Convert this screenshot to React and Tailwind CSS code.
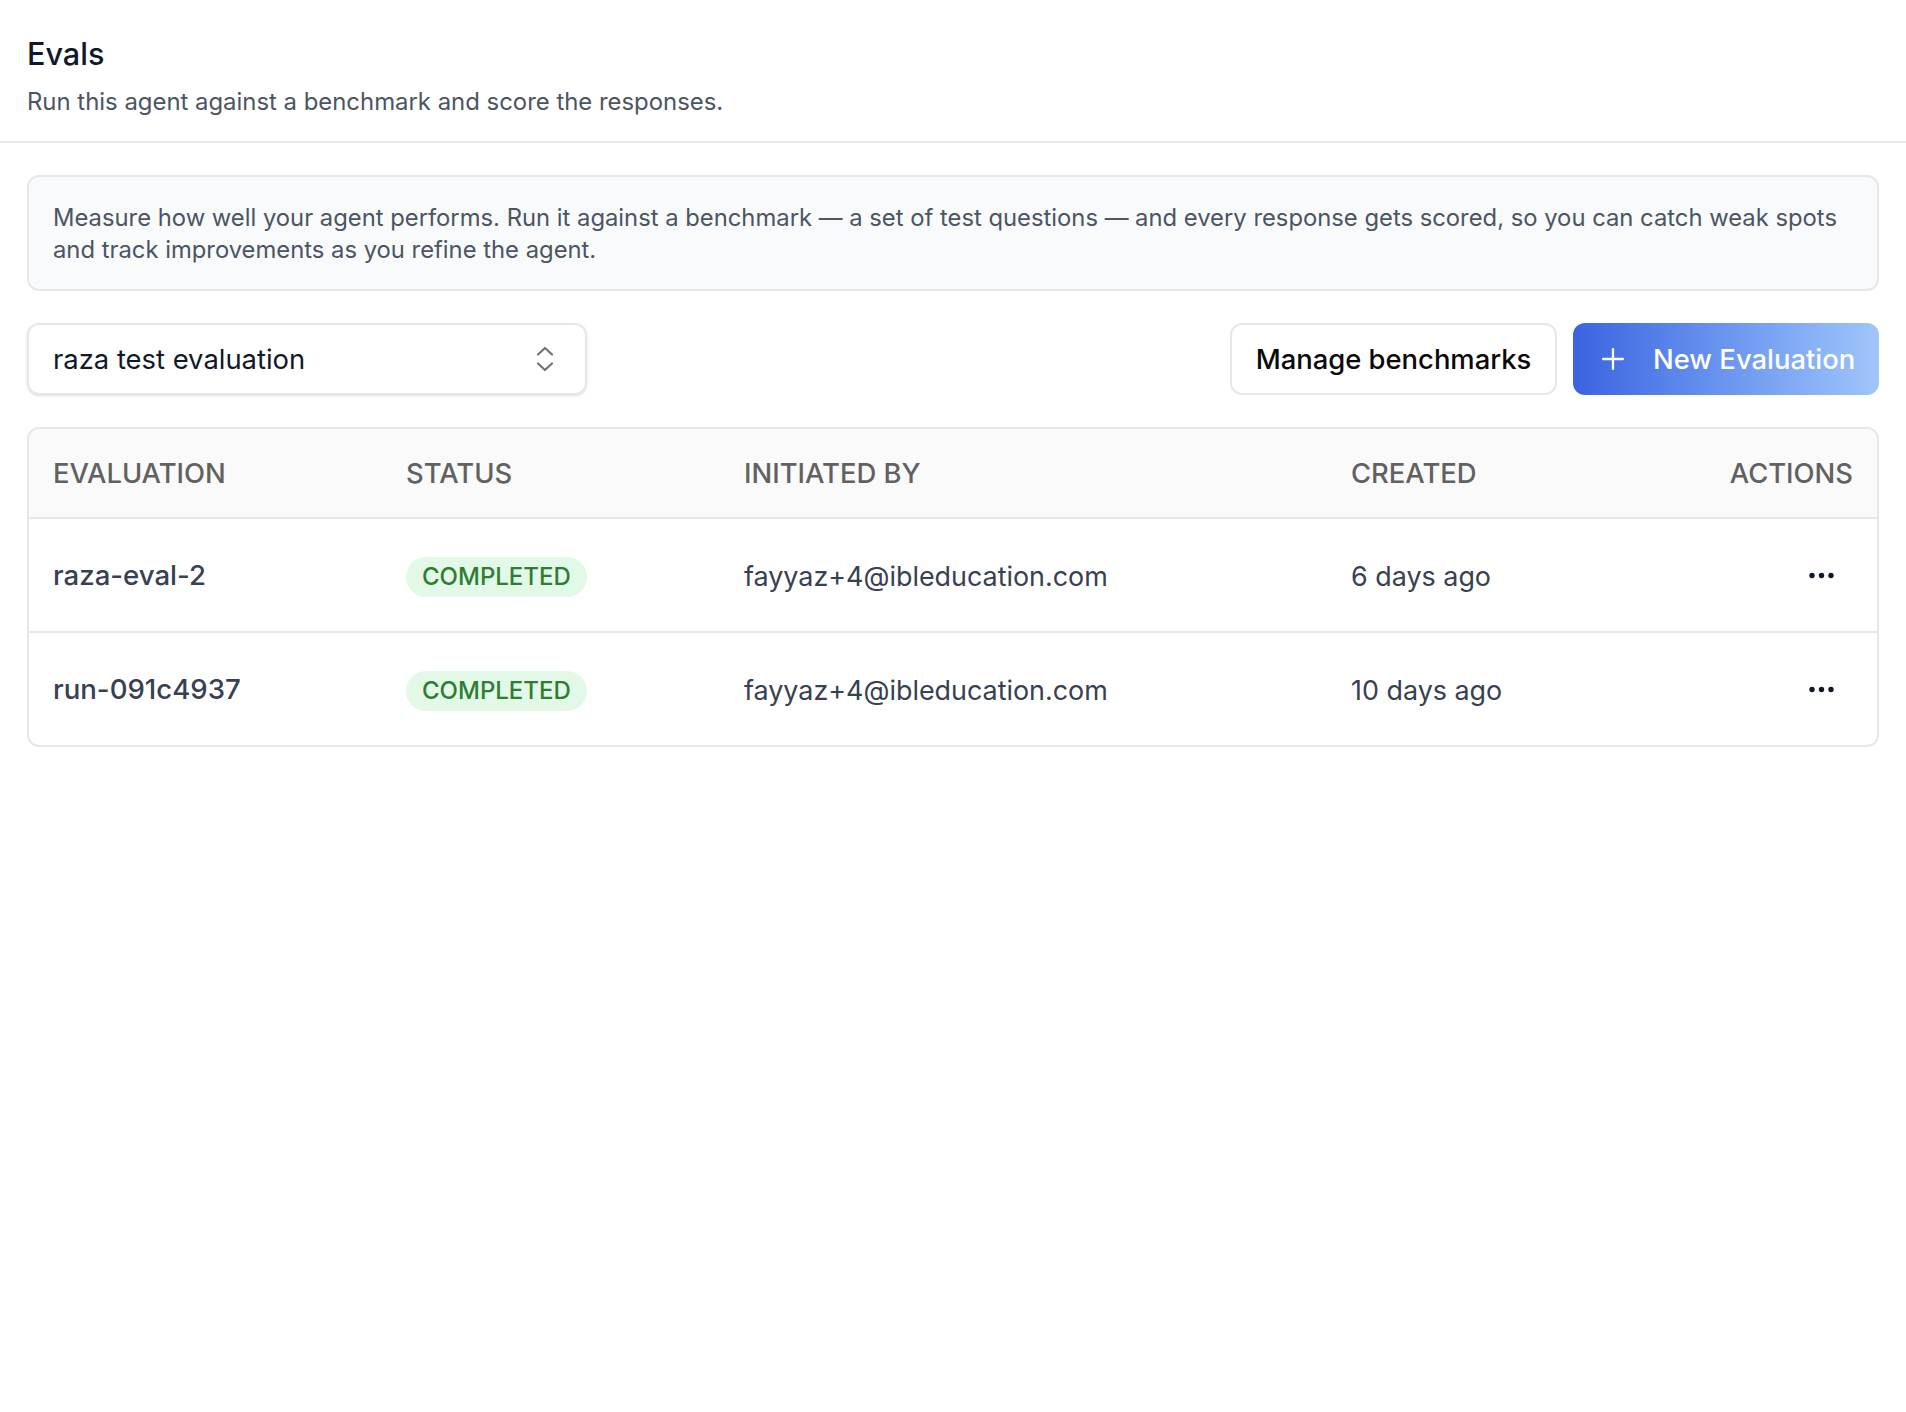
import React from 'react';
import { Plus } from 'lucide-react';

const rows = [
  { name: 'raza-eval-2', by: 'fayyaz+4@ibleducation.com', created: '6 days ago' },
  { name: 'run-091c4937', by: 'fayyaz+4@ibleducation.com', created: '10 days ago' },
];

const cols = 'grid grid-cols-[353px_338px_607px_1fr_auto] items-center pl-6 pr-6';

const UpDown = () => (
  <svg width="18" height="28" viewBox="0 0 18 28" fill="none" stroke="#737373" strokeWidth="2.2" strokeLinecap="round" strokeLinejoin="round">
    <path d="M2 9.5 L9 3 L16 9.5" />
    <path d="M2 18.5 L9 25 L16 18.5" />
  </svg>
);

const Dots = () => (
  <svg width="25" height="7" viewBox="0 0 25 7" className="mr-[19.5px]" fill="#111827">
    <circle cx="3" cy="3.5" r="2.7" />
    <circle cx="12.5" cy="3.5" r="2.7" />
    <circle cx="22" cy="3.5" r="2.7" />
  </svg>
);

const App = () => {
  return (
    <div className="min-h-[1412px] bg-white font-['Inter',sans-serif]">
      <div className="h-[143px] border-b-2 border-[#e5e7eb] px-[27px] pt-[34px]">
        <h1 className="text-[30.6px] leading-[40px] font-[450] text-[#111827]">Evals</h1>
        <p className="mt-[11px] text-[23.9px] leading-[34px] text-[#4b5563]">Run this agent against a benchmark and score the responses.</p>
      </div>

      <div className="px-[27px] pt-8">
        <div className="rounded-xl border-2 border-[#e5e7eb] bg-[#f9fafb] px-6 pt-[25px] pb-[23px] text-[23.8px] leading-[32px] text-[#4b5563]">
          Measure how well your agent performs. Run it against a benchmark — a set of test questions — and every response gets scored, so you can catch weak spots and track improvements as you refine the agent.
        </div>

        <div className="mt-8 flex items-center">
          <div className="flex h-[72px] w-[560px] items-center justify-between rounded-xl border-2 border-[#e5e7eb] bg-white pl-6 pr-[31px] shadow-sm">
            <span className="pt-[2px] text-[27.4px] text-[#111827]">raza test evaluation</span>
            <UpDown />
          </div>
          <button className="ml-auto h-[72px] w-[327px] rounded-xl border-2 border-[#e5e7eb] bg-white pt-[2px] text-[27.4px] font-[450] text-[#0a0a0a]">
            Manage benchmarks
          </button>
          <button className="ml-4 flex h-[72px] w-[306px] items-center rounded-xl bg-linear-to-r from-[#3b63e0] to-[#a0c5fb] pl-[23px] text-[27.4px] font-[450] text-white">
            <Plus size={34} strokeWidth={1.6} />
            <span className="ml-[23px] pt-[2px]">New Evaluation</span>
          </button>
        </div>

        <div className="mt-8 overflow-hidden rounded-xl border-2 border-[#e5e7eb] bg-white">
          <div className={`${cols} h-[90px] border-b-2 border-[#e5e7eb] bg-[#fafafa] pt-[2px] text-[27.4px] font-[450] text-[#616161]`}>
            <span>EVALUATION</span>
            <span>STATUS</span>
            <span>INITIATED BY</span>
            <span>CREATED</span>
            <span>ACTIONS</span>
          </div>
          {rows.map((row, index) => (
            <div key={index} className={`${cols} text-[26.9px] text-[#374151] ${index === 0 ? 'h-[114px] border-b-2 border-[#e5e7eb]' : 'h-[112px]'}`}>
              <span className="pt-[2px] text-[27.6px] font-[450]">{row.name}</span>
              <span className="pt-[2px]">
                <span className="inline-flex h-10 items-center rounded-full bg-[#e2f9e8] px-4 pt-[1px] text-[24px] font-medium text-[#2e7d32]">COMPLETED</span>
              </span>
              <span className="pt-[2px]">{row.by}</span>
              <span className="pt-[2px]">{row.created}</span>
              <span className="flex justify-end"><Dots /></span>
            </div>
          ))}
        </div>
      </div>
    </div>
  );
};

export default App;
